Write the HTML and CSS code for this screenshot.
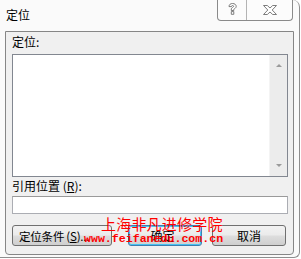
FILE: index.html
```html
<!DOCTYPE html>
<html>
<head>
<meta charset="utf-8">
<link rel="stylesheet" href="styles.css">
</head>
<body>
<div class="frame">
  <div class="titlebar">
    <span class="title">定位</span>
    <div class="caption">
      <div class="cbtn help">
        <svg width="9" height="12" viewBox="0 0 9 12"><path d="M1 3.6 C1 1.4 2.7 .5 4.5 .5 C6.7 .5 8.2 1.7 8.2 3.4 C8.2 5.1 6.4 5.6 5.8 6.3 L5.8 7.5 L3.3 7.5 L3.3 5.9 C3.3 4.8 5.6 4.3 5.6 3.4 C5.6 2.8 5.1 2.5 4.6 2.5 C3.9 2.5 3.5 2.9 3.5 3.6 Z M3.3 8.6 L5.8 8.6 L5.8 11.3 L3.3 11.3 Z" fill="#fff" stroke="#6e6e6e" stroke-width="0.9"/></svg>
      </div>
      <div class="cbtn close">
        <svg width="14" height="10" viewBox="0 0 14 10"><path d="M.5 .5 L4.3 .5 L7 3 L9.7 .5 L13.5 .5 L9.2 5 L13.5 9.5 L9.7 9.5 L7 7 L4.3 9.5 L.5 9.5 L4.8 5 Z" fill="#fff" stroke="#6e6e6e" stroke-width="0.9"/></svg>
      </div>
    </div>
  </div>
  <div class="panel">
    <div class="label l1">定位:</div>
    <div class="listbox">
      <div class="list-area"></div>
      <div class="vscroll">
        <span class="arrow up"></span>
        <span class="arrow down"></span>
      </div>
    </div>
    <div class="label l2">引用位置 (<u>R</u>):</div>
    <div class="input"></div>
    <div class="buttons">
      <div class="btn wide"><span class="btxt">定位条件&thinsp;(<u>S</u>)...</span></div>
      <div class="btn def">确定</div>
      <div class="btn">取消</div>
    </div>
    <div class="watermark">
      <div class="wm1">上海非凡进修学院</div>
      <div class="wm2">www.feifanedu.com.cn</div>
    </div>
  </div>
</div>
</body>
</html>
```
FILE: styles.css
```css
html, body {
  margin: 0;
  padding: 0;
  background: #ffffff;
}
body {
  width: 301px;
  height: 259px;
  overflow: hidden;
  font-family: "Noto Sans CJK SC", "Noto Sans", sans-serif;
  font-size: 12px;
  color: #000;
}
.frame {
  width: 300px;
  height: 258px;
  background: #fafafa;
  border-right: 1px solid #8e8e8e;
  border-bottom: 1px solid #8e8e8e;
  border-top-right-radius: 7px;
  border-bottom-right-radius: 6px;
  box-sizing: border-box;
  position: relative;
}
.titlebar {
  height: 31px;
  display: flex;
  align-items: flex-start;
}
.title {
  margin-left: 6px;
  margin-top: 7px;
  line-height: 15px;
  font-size: 12px;
}
.caption {
  margin-left: auto;
  margin-right: 6px;
  display: flex;
  width: 76px;
  height: 21px;
  box-sizing: border-box;
  border: 1px solid #8a8a8a;
  border-top: none;
  border-radius: 0 0 4px 4px;
  background: #fcfcfc;
}
.cbtn {
  display: flex;
  justify-content: center;
  padding-top: 3px;
  height: 20px;
  box-sizing: border-box;
}
.cbtn.help {
  width: 29px;
  border-right: 1px solid #b4b4b4;
}
.cbtn.close {
  flex: 1;
  padding-top: 5px;
}
.panel {
  margin-left: 5px;
  width: 289px;
  height: 224px;
  box-sizing: border-box;
  border: 1px solid #868686;
  border-radius: 0 0 4px 4px;
  background: #f0f0f0;
  padding: 3px 0 0 6px;
  display: flex;
  flex-direction: column;
  position: relative;
}
.label {
  line-height: 14px;
  height: 14px;
  white-space: nowrap;
}
.label u, .btn u {
  text-decoration: underline;
}
.listbox {
  margin-top: 5px;
  width: 276px;
  height: 123px;
  box-sizing: border-box;
  border: 1px solid #828790;
  background: #fff;
  display: flex;
}
.list-area {
  flex: 1;
}
.vscroll {
  width: 17px;
  background: #ececec;
  border-left: 1px solid #f4f4f4;
  position: relative;
}
.arrow {
  position: absolute;
  left: 6px;
  width: 0;
  height: 0;
  border-left: 3px solid transparent;
  border-right: 3px solid transparent;
}
.arrow.up {
  top: 9px;
  border-bottom: 3px solid #9a9a9a;
}
.arrow.down {
  bottom: 9px;
  border-top: 3px solid #9a9a9a;
}
.label.l2 {
  margin-top: 2px;
}
.input {
  margin-top: 3px;
  width: 276px;
  height: 18px;
  box-sizing: border-box;
  border: 1px solid #abadb3;
  border-top-color: #9a9a9a;
  background: #fff;
}
.buttons {
  margin-top: 11px;
  display: flex;
  width: 274px;
}
.btn {
  width: 74px;
  flex: none;
  height: 21px;
  box-sizing: border-box;
  border: 1px solid #707070;
  border-radius: 3px;
  background: linear-gradient(#f2f2f2 0%, #ebebeb 48%, #dddddd 52%, #cfcfcf 100%);
  display: flex;
  align-items: center;
  justify-content: center;
  line-height: 14px;
  white-space: nowrap;
}
.btn.wide {
  width: 100px;
  justify-content: flex-start;
  padding-left: 6px;
}
.btxt {
  font-size: 11.5px;
  letter-spacing: -0.2px;
}
.btn.def {
  margin-left: 16px;
  border-color: #3c7fb1;
  box-shadow: inset 0 0 0 1px #48c2f2;
  padding-right: 5px;
}
.btn.def + .btn {
  margin-left: 10px;
}
.watermark {
  position: absolute;
  left: 78px;
  top: 182px;
  color: #ff0000;
  pointer-events: none;
}
.wm1 {
  font-family: "Noto Sans CJK SC", sans-serif;
  font-size: 15px;
  line-height: 19px;
  margin-left: 17px;
  letter-spacing: 0.2px;
}
.wm2 {
  font-family: "Liberation Mono", monospace;
  font-size: 11.6px;
  font-weight: bold;
  line-height: 12px;
}
```
